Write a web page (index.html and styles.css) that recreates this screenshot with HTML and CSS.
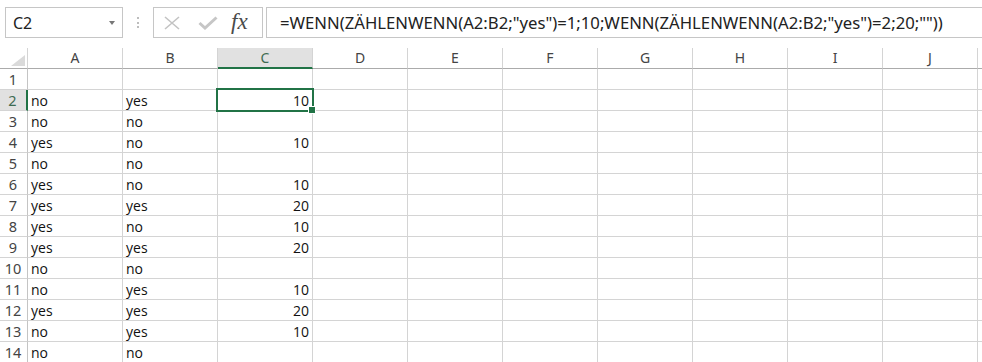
FILE: index.html
```html
<!DOCTYPE html>
<html>
<head>
<meta charset="utf-8">
<link rel="stylesheet" href="styles.css">
</head>
<body>
<div class="toolbar">
  <div class="namebox"><span class="nb-text">C2</span><span class="nb-arrow"></span></div>
  <div class="sep"><span class="dots"></span></div>
  <div class="buttons">
    <svg class="ico-x" width="18" height="14" viewBox="0 0 18 14"><path d="M2 1 L16 13 M16 1 L2 13" stroke="#c3c3c3" stroke-width="1.6" fill="none"/></svg>
    <svg class="ico-check" width="20" height="14" viewBox="0 0 20 14"><path d="M1.5 7 L7 12 L18.5 1.5" stroke="#c6c6c6" stroke-width="3" fill="none"/></svg>
    <span class="fx">fx</span>
  </div>
  <div class="formula">=WENN(ZÄHLENWENN(A2:B2;"yes")=1;10;WENN(ZÄHLENWENN(A2:B2;"yes")=2;20;""))</div>
</div>
<div class="sheet">
  <div class="corner"><span class="tri"></span></div>
  <div class="ch">A</div><div class="ch">B</div><div class="ch sel">C</div><div class="ch">D</div><div class="ch">E</div><div class="ch">F</div><div class="ch">G</div><div class="ch">H</div><div class="ch">I</div><div class="ch">J</div><div class="ch last"></div>

  <div class="rh">1</div><div class="c"></div><div class="c"></div><div class="c"></div><div class="c"></div><div class="c"></div><div class="c"></div><div class="c"></div><div class="c"></div><div class="c"></div><div class="c"></div><div class="c last"></div>
  <div class="rh sel">2</div><div class="c">no</div><div class="c">yes</div><div class="c n active">10<span class="selbox"></span><span class="handle"></span></div><div class="c"></div><div class="c"></div><div class="c"></div><div class="c"></div><div class="c"></div><div class="c"></div><div class="c"></div><div class="c last"></div>
  <div class="rh">3</div><div class="c">no</div><div class="c">no</div><div class="c n"></div><div class="c"></div><div class="c"></div><div class="c"></div><div class="c"></div><div class="c"></div><div class="c"></div><div class="c"></div><div class="c last"></div>
  <div class="rh">4</div><div class="c">yes</div><div class="c">no</div><div class="c n">10</div><div class="c"></div><div class="c"></div><div class="c"></div><div class="c"></div><div class="c"></div><div class="c"></div><div class="c"></div><div class="c last"></div>
  <div class="rh">5</div><div class="c">no</div><div class="c">no</div><div class="c n"></div><div class="c"></div><div class="c"></div><div class="c"></div><div class="c"></div><div class="c"></div><div class="c"></div><div class="c"></div><div class="c last"></div>
  <div class="rh">6</div><div class="c">yes</div><div class="c">no</div><div class="c n">10</div><div class="c"></div><div class="c"></div><div class="c"></div><div class="c"></div><div class="c"></div><div class="c"></div><div class="c"></div><div class="c last"></div>
  <div class="rh">7</div><div class="c">yes</div><div class="c">yes</div><div class="c n">20</div><div class="c"></div><div class="c"></div><div class="c"></div><div class="c"></div><div class="c"></div><div class="c"></div><div class="c"></div><div class="c last"></div>
  <div class="rh">8</div><div class="c">yes</div><div class="c">no</div><div class="c n">10</div><div class="c"></div><div class="c"></div><div class="c"></div><div class="c"></div><div class="c"></div><div class="c"></div><div class="c"></div><div class="c last"></div>
  <div class="rh">9</div><div class="c">yes</div><div class="c">yes</div><div class="c n">20</div><div class="c"></div><div class="c"></div><div class="c"></div><div class="c"></div><div class="c"></div><div class="c"></div><div class="c"></div><div class="c last"></div>
  <div class="rh">10</div><div class="c">no</div><div class="c">no</div><div class="c n"></div><div class="c"></div><div class="c"></div><div class="c"></div><div class="c"></div><div class="c"></div><div class="c"></div><div class="c"></div><div class="c last"></div>
  <div class="rh">11</div><div class="c">no</div><div class="c">yes</div><div class="c n">10</div><div class="c"></div><div class="c"></div><div class="c"></div><div class="c"></div><div class="c"></div><div class="c"></div><div class="c"></div><div class="c last"></div>
  <div class="rh">12</div><div class="c">yes</div><div class="c">yes</div><div class="c n">20</div><div class="c"></div><div class="c"></div><div class="c"></div><div class="c"></div><div class="c"></div><div class="c"></div><div class="c"></div><div class="c last"></div>
  <div class="rh">13</div><div class="c">no</div><div class="c">yes</div><div class="c n">10</div><div class="c"></div><div class="c"></div><div class="c"></div><div class="c"></div><div class="c"></div><div class="c"></div><div class="c"></div><div class="c last"></div>
  <div class="rh">14</div><div class="c">no</div><div class="c">no</div><div class="c n"></div><div class="c"></div><div class="c"></div><div class="c"></div><div class="c"></div><div class="c"></div><div class="c"></div><div class="c"></div><div class="c last"></div>
</div>
</body>
</html>
```

FILE: styles.css
```css
* { box-sizing: border-box; }
html, body { margin: 0; padding: 0; background: #fff; overflow: hidden; }
body { width: 982px; height: 362px; font-family: "Open Sans", "Noto Sans", sans-serif; }

.toolbar {
  display: flex;
  align-items: flex-start;
  height: 48px;
  padding: 7px 0 0 5px;
}
.namebox {
  width: 118px;
  height: 31px;
  border: 1px solid #c6c6c6;
  display: flex;
  align-items: center;
  justify-content: space-between;
  padding: 0 7px 0 7px;
}
.nb-text {
  font-family: "Noto Sans", sans-serif;
  font-size: 16px;
  color: #222;
}
.nb-arrow {
  width: 0; height: 0;
  border-left: 3.5px solid transparent;
  border-right: 3.5px solid transparent;
  border-top: 4px solid #777;
}
.sep {
  width: 30px;
  height: 31px;
  display: flex;
  align-items: center;
  justify-content: center;
}
.dots {
  width: 2px;
  height: 11px;
  border-left: 2px dotted #bdbdbd;
}
.buttons {
  width: 110px;
  height: 31px;
  border: 1px solid #c6c6c6;
  display: flex;
  align-items: center;
  padding-left: 9px;
}
.ico-x { margin-right: 17px; }
.ico-check { margin-right: 13px; }
.fx {
  font-family: "Liberation Serif", "DejaVu Serif", serif;
  font-style: italic;
  font-size: 23px;
  color: #4a4a4a;
  line-height: 1;
  margin-top: -2px;
}
.formula {
  flex: 1;
  margin-left: 3px;
  height: 31px;
  border: 1px solid #c6c6c6;
  border-right: none;
  padding-left: 13px;
  font-family: "Noto Sans", sans-serif;
  font-size: 16.7px;
  line-height: 29px;
  color: #222;
  white-space: nowrap;
  overflow: hidden;
}

.sheet {
  display: grid;
  grid-template-columns: 28px repeat(10, 95px) 1fr;
  grid-auto-rows: 21px;
}
.corner {
  border-right: 1px solid #d4d4d4;
  border-bottom: 1px solid #ababab;
  position: relative;
}
.tri {
  position: absolute;
  left: 11px;
  top: 7px;
  width: 0; height: 0;
  border-left: 14px solid transparent;
  border-bottom: 11px solid #dadada;
}
.ch {
  border-right: 1px solid #d4d4d4;
  border-bottom: 1px solid #ababab;
  text-align: center;
  font-family: "Noto Sans", sans-serif;
  font-size: 14px;
  line-height: 20px;
  color: #444;
}
.ch.sel {
  background: #e1e1e1;
  border-bottom: 2px solid #217346;
  color: #3e6b52;
}
.rh {
  border-right: 1px solid #c4c4c4;
  border-bottom: 1px solid #d4d4d4;
  text-align: center;
  font-family: "Noto Sans", sans-serif;
  font-size: 14.5px;
  line-height: 21px;
  color: #444;
  padding-right: 1px;
}
.rh.sel {
  background: #e1e1e1;
  border-right: 2px solid #217346;
  color: #3e6b52;
}
.c {
  border-right: 1px solid #d4d4d4;
  border-bottom: 1px solid #d4d4d4;
  font-size: 14px;
  line-height: 21px;
  color: #111;
  padding: 0 3px;
  white-space: nowrap;
}
.last { border-right: none; }
.c.n { text-align: right; }
.active { position: relative; }
.selbox {
  position: absolute;
  left: -2px;
  top: -2px;
  width: 98px;
  height: 24px;
  border: 2px solid #217346;
  pointer-events: none;
}
.handle {
  position: absolute;
  left: 90px;
  top: 16px;
  width: 8px;
  height: 8px;
  background: #217346;
  border: 1px solid #fff;
}
```
